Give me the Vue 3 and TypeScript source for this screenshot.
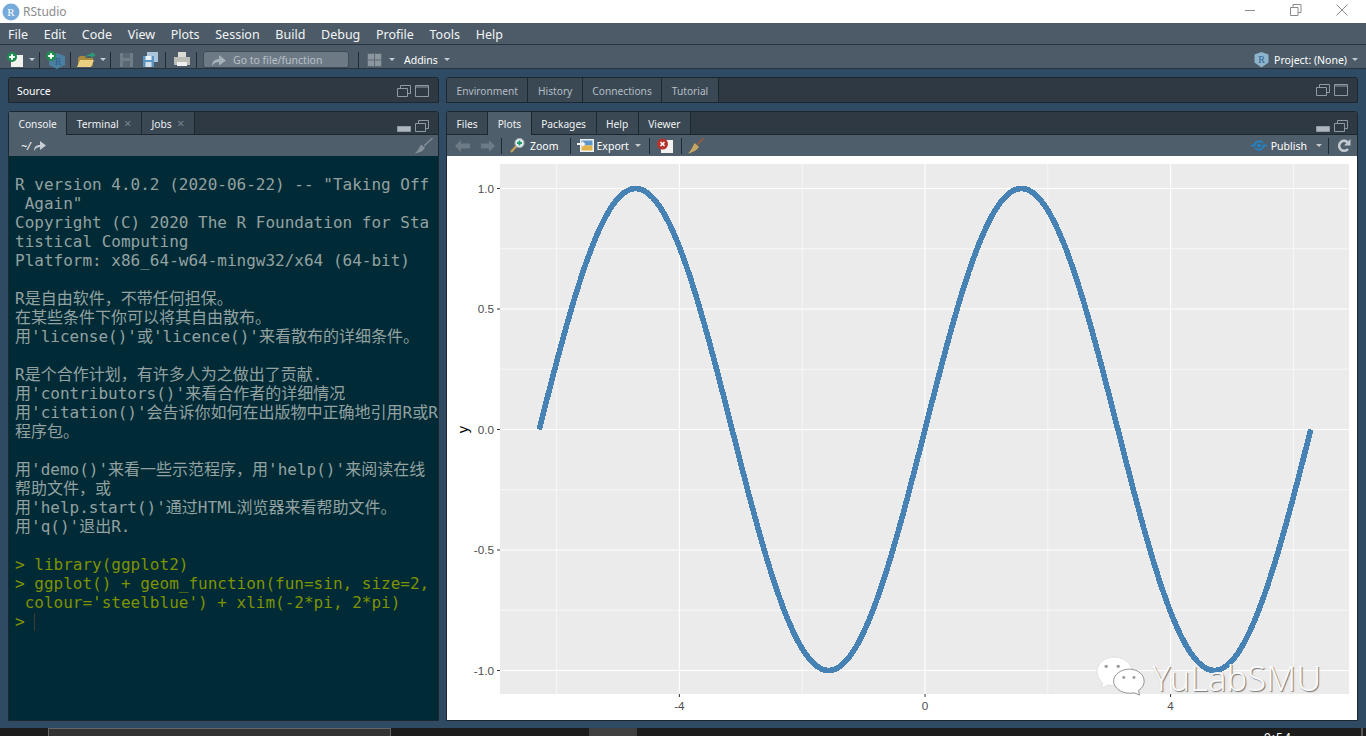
<script setup lang="ts">
import { computed } from "vue";

const menus = ["File", "Edit", "Code", "View", "Plots", "Session", "Build", "Debug", "Profile", "Tools", "Help"];
const envTabs = ["Environment", "History", "Connections", "Tutorial"];
const fileTabs = ["Files", "Plots", "Packages", "Help", "Viewer"];

const banner = [
  'R version 4.0.2 (2020-06-22) -- "Taking Off',
  ' Again"',
  "Copyright (C) 2020 The R Foundation for Sta",
  "tistical Computing",
  "Platform: x86_64-w64-mingw32/x64 (64-bit)",
  "",
  "R是自由软件，不带任何担保。",
  "在某些条件下你可以将其自由散布。",
  "用'license()'或'licence()'来看散布的详细条件。",
  "",
  "R是个合作计划，有许多人为之做出了贡献.",
  "用'contributors()'来看合作者的详细情况",
  "用'citation()'会告诉你如何在出版物中正确地引用R或R",
  "程序包。",
  "",
  "用'demo()'来看一些示范程序，用'help()'来阅读在线",
  "帮助文件，或",
  "用'help.start()'通过HTML浏览器来看帮助文件。",
  "用'q()'退出R.",
  "",
];
const input = [
  "> library(ggplot2)",
  "> ggplot() + geom_function(fun=sin, size=2,",
  " colour='steelblue') + xlim(-2*pi, 2*pi)",
];

// plot scale, in page pixels
const px = (x: number) => 925 + x * 61.4;
const py = (y: number) => 429.5 - y * 241;

const yMajor = [1, 0.5, 0, -0.5, -1];
const yMinor = [0.75, 0.25, -0.25, -0.75];
const xMajor = [-4, 0, 4];
const xMinor = [-6, -2, 2, 6];

const curve = computed(() => {
  const pts: string[] = [];
  for (let i = 0; i <= 300; i++) {
    const x = -2 * Math.PI + (i / 300) * 4 * Math.PI;
    pts.push(`${px(x).toFixed(1)},${py(Math.sin(x)).toFixed(1)}`);
  }
  return "M" + pts.join("L");
});
</script>

<template>
  <div class="app">
    <header class="titlebar">
      <svg class="r-logo" width="18" height="18" viewBox="0 0 18 18">
        <circle cx="9" cy="9" r="8.5" fill="#75aadb" />
        <text x="9" y="13" text-anchor="middle" class="r-letter">R</text>
      </svg>
      <span class="title">RStudio</span>
      <div class="winctl">
        <svg width="12" height="12" viewBox="0 0 12 12"><path d="M1 6.500h10" stroke="#8a8a8a" fill="none" /></svg>
        <svg width="12" height="12" viewBox="0 0 12 12"><path d="M.5 3.500h7.500v8H.5zM3 3.500V.5h8v8H8" stroke="#8a8a8a" fill="none" /></svg>
        <svg width="12" height="12" viewBox="0 0 12 12"><path d="M.5.500l11 11M11.500.500l-11 11" stroke="#8a8a8a" fill="none" /></svg>
      </div>
    </header>

    <nav class="menubar">
      <span v-for="m in menus" :key="m">{{ m }}</span>
    </nav>

    <div class="toolbar">
      <svg class="new-file" width="16" height="15" viewBox="0 0 16 15">
        <path d="M4 3h12v12H4z" fill="#f1f1ee" />
        <circle cx="5" cy="5" r="5" fill="#1f8a4d" />
        <path d="M5 2.200v5.600M2.200 5h5.600" stroke="#fff" stroke-width="2" />
      </svg>
      <i class="caret"></i>
      <i class="sep near"></i>
      <svg width="20" height="18" viewBox="0 0 20 18">
        <path d="M11 2l8 3v9l-8 4-8-4V5z" fill="#4a7f9f" />
        <text x="12" y="14" text-anchor="middle" class="tiny-r">R</text>
        <circle cx="5" cy="5" r="5" fill="#1f8a4d" />
        <path d="M5 2.200v5.600M2.200 5h5.600" stroke="#fff" stroke-width="2" />
      </svg>
      <i class="sep near"></i>
      <svg width="19" height="16" viewBox="0 0 19 16">
        <path d="M1 6l2-2h5l1 2h7v8H1z" fill="#a98a3c" />
        <path d="M0 15l3-7h14l-3 7z" fill="#e9cf82" />
        <path d="M8 5c2-2 4-3 6-3V0l5 3-5 3V4c-2 0-4 0-6 1z" fill="#2f9a78" />
      </svg>
      <i class="caret near"></i>
      <i class="sep near"></i>
      <svg class="save" width="13" height="14" viewBox="0 0 13 14">
        <path d="M0 0h13v14H0z" fill="#6f7d89" />
        <path d="M3 0h7v5H3zM3 8h7v6H3z" fill="#5a6873" />
      </svg>
      <svg class="save-all" width="15" height="15" viewBox="0 0 15 15">
        <path d="M4 0h11v10H4z" fill="#a9c6dd" />
        <path d="M0 4h11v11H0z" fill="#5b93c2" />
        <path d="M2.500 4h6v4h-6z" fill="#e9f0f6" />
        <path d="M2.500 10h6v5h-6z" fill="#d5dfe7" />
      </svg>
      <i class="sep mid"></i>
      <svg class="print" width="16" height="15" viewBox="0 0 16 15">
        <path d="M4 0h8v5H4z" fill="#dcdcd6" />
        <path d="M0 5h16v8H0z" fill="#bdbdb8" />
        <path d="M3 10h10v4H3z" fill="#efefef" />
      </svg>
      <i class="sep"></i>
      <div class="goto">
        <svg width="14" height="12" viewBox="0 0 14 12">
          <path d="M0 12c0-5 3-7 7-7V1l7 5.500-7 5V8c-3 0-5 1-7 4z" fill="#a5b0b9" />
        </svg>
        <span>Go to file/function</span>
      </div>
      <i class="sep wide"></i>
      <svg class="grid-icon" width="15" height="14" viewBox="0 0 15 14">
        <path d="M0 0h15v14H0z" fill="#5c6873" />
        <path d="M1 1h6v5.500H1zM8 1h6v5.500H8zM1 7.500h6V13H1zM8 7.500h6V13H8z" fill="#8c969f" />
      </svg>
      <i class="caret mid"></i>
      <span class="addins">Addins</span>
      <i class="caret"></i>
      <div class="project">
        <svg width="15" height="16" viewBox="0 0 15 16">
          <path d="M7.500 0l7 2.500v8l-7 5-7-5v-8z" fill="#8db4cc" />
          <text x="7.500" y="11" text-anchor="middle" class="tiny-r">R</text>
        </svg>
        <span>Project: (None)</span>
        <i class="caret"></i>
      </div>
    </div>

    <main class="workspace">
      <section class="col left">
        <div class="pane-head source">
          <span class="source-label">Source</span>
          <div class="pane-ctl">
            <svg width="14" height="12" viewBox="0 0 14 12"><path d="M.5 3.500h10v8H.5zM3.500 3.500V.5h10v8h-3" fill="none" stroke="#8e99a3" /></svg>
            <svg width="14" height="12" viewBox="0 0 14 12"><path d="M.5.500h13v11H.5z" fill="none" stroke="#8e99a3" /><path d="M.5 2h13" stroke="#8e99a3" /></svg>
          </div>
        </div>

        <div class="pane console">
          <div class="tabs">
            <div class="tab active">Console</div>
            <div class="tab">Terminal<span class="x">×</span></div>
            <div class="tab">Jobs<span class="x">×</span></div>
            <div class="pane-ctl">
              <svg width="14" height="12" viewBox="0 0 14 12"><path d="M.5 6.500h13v5H.5z" fill="#aeb7be" stroke="#8e99a3" /></svg>
              <svg width="14" height="12" viewBox="0 0 14 12"><path d="M.5 3.500h10v8H.5zM3.500 3.500V.5h10v8h-3" fill="none" stroke="#8e99a3" /></svg>
            </div>
          </div>
          <div class="subbar console-bar">
            <span class="cwd">~/</span>
            <svg width="12" height="10" viewBox="0 0 12 10">
              <path d="M0 10c0-4 2-6 6-6V0l6 4.500-6 4.500V6c-3 0-4 1-6 4z" fill="#c8ced3" />
            </svg>
            <svg class="broom" width="19" height="16" viewBox="0 0 19 16">
              <path d="M18.500 0L10 8" stroke="#87919a" stroke-width="1.200" />
              <path d="M7 6.500l4 3.500c-2 3-5 5-11 5.500 3-1 5-5 7-9z" fill="#87919a" />
            </svg>
          </div>
          <div class="term">
            <div v-for="(line, i) in banner" :key="i" class="line">{{ line }}</div>
            <div v-for="(line, i) in input" :key="'in' + i" class="line cmd">{{ line }}</div>
            <div class="line cmd">&gt; <span class="cursor"></span></div>
          </div>
        </div>
      </section>

      <section class="col right">
        <div class="pane-head env">
          <div v-for="t in envTabs" :key="t" class="tab flat">{{ t }}</div>
          <div class="pane-ctl">
            <svg width="14" height="12" viewBox="0 0 14 12"><path d="M.5 3.500h10v8H.5zM3.500 3.500V.5h10v8h-3" fill="none" stroke="#8e99a3" /></svg>
            <svg width="14" height="12" viewBox="0 0 14 12"><path d="M.5.500h13v11H.5z" fill="none" stroke="#8e99a3" /><path d="M.5 2h13" stroke="#8e99a3" /></svg>
          </div>
        </div>

        <div class="pane plots">
          <div class="tabs">
            <div v-for="t in fileTabs" :key="t" class="tab bright" :class="{ active: t === 'Plots' }">{{ t }}</div>
            <div class="pane-ctl">
              <svg width="14" height="12" viewBox="0 0 14 12"><path d="M.5 6.500h13v5H.5z" fill="#aeb7be" stroke="#8e99a3" /></svg>
              <svg width="14" height="12" viewBox="0 0 14 12"><path d="M.5 3.500h10v8H.5zM3.500 3.500V.5h10v8h-3" fill="none" stroke="#8e99a3" /></svg>
            </div>
          </div>
          <div class="subbar plot-bar">
            <svg class="nav" width="15" height="12" viewBox="0 0 15 12"><path d="M0 6l6-6v3.500h9v5H6V12z" fill="#6d7b87" /></svg>
            <svg class="nav-next" width="14" height="12" viewBox="0 0 14 12"><path d="M14 6L8 0v3.500H0v5h8V12z" fill="#6d7b87" /></svg>
            <i class="sep"></i>
            <svg class="zoom-icon" width="15" height="15" viewBox="0 0 15 15">
              <path d="M1 14l5.500-6" stroke="#c9a25a" stroke-width="2.200" />
              <circle cx="9.500" cy="5" r="4.600" fill="#e5eef0" stroke="#9aa7ad" />
              <path d="M9.500 2.500v5M7 5h5" stroke="#1f9a6a" stroke-width="1.800" />
            </svg>
            <span class="tool-label zoom">Zoom</span>
            <i class="sep"></i>
            <svg width="17" height="13" viewBox="0 0 17 13">
              <path d="M3 0h14v13H3z" fill="#eef1f3" />
              <path d="M4.500 1.500h11v5h-11z" fill="#5e97c6" />
              <path d="M4.500 6.500h11v5h-11z" fill="#e0b44b" />
              <path d="M0 4h5V2l3.500 3L5 8V6H0z" fill="#f5f5f5" />
            </svg>
            <span class="tool-label export">Export</span>
            <i class="caret"></i>
            <i class="sep after-caret"></i>
            <svg class="clear" width="16" height="15" viewBox="0 0 16 15">
              <path d="M4 2h12v13H4z" fill="#f2f2f0" />
              <circle cx="5.500" cy="6" r="5.500" fill="#b8332e" />
              <path d="M3.500 4l4 4M7.500 4l-4 4" stroke="#fff" stroke-width="1.600" />
            </svg>
            <i class="sep after-clear"></i>
            <svg width="16" height="16" viewBox="0 0 16 16">
              <path d="M15.500 0L9 7" stroke="#a55a3a" stroke-width="1.400" />
              <path d="M6.500 5l4.500 4c-2 3-5 5-11 6.500 3-3 4.500-6.500 6.500-10.500z" fill="#c7a763" />
            </svg>
            <div class="plot-right">
              <svg width="16" height="13" viewBox="0 0 16 13">
                <path d="M0 6.500h3.500a4.800 4.800 0 0 1 8.500-2.500M16 6.500h-3.500a4.800 4.800 0 0 1-8.500 2.500" fill="none" stroke="#2383c4" stroke-width="1.800" />
                <circle cx="8" cy="6.500" r="2" fill="#2383c4" />
              </svg>
              <span class="tool-label publish">Publish</span>
              <i class="caret"></i>
              <i class="sep before-refresh"></i>
              <svg width="14" height="14" viewBox="0 0 14 14">
                <path d="M11 10a5 5 0 1 1 .3-6" fill="none" stroke="#c3cad0" stroke-width="2.600" />
                <path d="M13.500 0v6.500H7z" fill="#c3cad0" />
              </svg>
            </div>
          </div>

          <div class="plot-area">
            <svg class="plot" width="910" height="564" viewBox="447 156 910 564">
              <rect x="500" y="164" width="849" height="530" fill="#ebebeb" />
              <line v-for="y in yMinor" :key="'yn' + y" x1="500" x2="1349" :y1="py(y)" :y2="py(y)" class="minor" />
              <line v-for="x in xMinor" :key="'xn' + x" y1="164" y2="694" :x1="px(x)" :x2="px(x)" class="minor" />
              <line v-for="y in yMajor" :key="'yj' + y" x1="500" x2="1349" :y1="py(y)" :y2="py(y)" class="major" />
              <line v-for="x in xMajor" :key="'xj' + x" y1="164" y2="694" :x1="px(x)" :x2="px(x)" class="major" />
              <path :d="curve" fill="none" stroke="#4682b4" stroke-width="5.600" stroke-linejoin="round" shape-rendering="crispEdges" />
              <g v-for="y in yMajor" :key="'yt' + y">
                <line x1="497" x2="500" :y1="py(y)" :y2="py(y)" class="tick" />
                <text x="494" :y="py(y) + 4" text-anchor="end" class="axis">{{ y.toFixed(1) }}</text>
              </g>
              <g v-for="x in xMajor" :key="'xt' + x">
                <line y1="694" y2="697" :x1="px(x)" :x2="px(x)" class="tick" />
                <text :x="px(x)" y="710" text-anchor="middle" class="axis">{{ x }}</text>
              </g>
              <text class="ylab" transform="translate(468 429.500) rotate(-90)" text-anchor="middle">y</text>
            </svg>

            <div class="watermark">
              <svg width="50" height="42" viewBox="0 0 54 45">
                <path d="M20 1C9 1 1 8 1 17c0 5 3 9 6 12l-1 6 7-4c2 .5 4 1 7 1 11 0 19-7 19-15S31 1 20 1z" fill="#fff" stroke="#ddd" />
                <path d="M36 14c-9 0-17 6-17 13s8 13 17 13c2 0 3 0 5-.5l6 2.500-1-5c4-2.500 6-6 6-10 0-7-7-13-16-13z" fill="#fff" stroke="#8a8a8a" />
                <circle cx="11" cy="11" r="1.800" fill="#9a9a9a" />
                <circle cx="24" cy="11" r="1.800" fill="#9a9a9a" />
                <circle cx="30" cy="23" r="1.600" fill="#9a9a9a" />
                <circle cx="41" cy="23" r="1.600" fill="#9a9a9a" />
              </svg>
              <span>YuLabSMU</span>
            </div>
          </div>
        </div>
      </section>
    </main>

    <footer class="taskbar">
      <div class="task-window"></div>
      <div class="task-active"></div>
      <span class="clock">9:54</span>
      <div class="task-end"></div>
    </footer>
  </div>
</template>

<style>
html,
body {
  margin: 0;
  background: #2f4a63;
}
</style>

<style scoped>
.app {
  width: 1366px;
  height: 736px;
  display: flex;
  flex-direction: column;
  overflow: hidden;
  background: #2f4a63;
  font-family: "Noto Sans", "Open Sans", sans-serif;
  color: #fff;
}

.titlebar {
  height: 23px;
  flex: none;
  background: #fff;
  display: flex;
  align-items: center;
  padding-left: 2px;
}
.r-letter {
  font: 11px "Liberation Serif", serif;
  fill: #fff;
}
.tiny-r {
  font: 10px "Liberation Serif", serif;
  fill: #2a5f8c;
}
.title {
  margin-left: 3px;
  font-size: 12px;
  color: #8c8c8c;
}
.winctl {
  margin-left: auto;
  display: flex;
  gap: 34px;
  padding: 0 18px 3px 0;
  align-items: center;
}

.menubar {
  height: 22px;
  flex: none;
  box-sizing: border-box;
  background: #4d5b68;
  border-bottom: 1px solid #27333d;
  display: flex;
  align-items: center;
  padding: 1px 0 0 8px;
  gap: 15.7px;
  font-size: 12.5px;
  color: #f2f4f5;
}

.toolbar {
  height: 24px;
  flex: none;
  box-sizing: border-box;
  background: #4d5b68;
  border-bottom: 1px solid #27333d;
  display: flex;
  align-items: center;
  padding: 6px 8px 0 7px;
  font-size: 10.5px;
  gap: 6px;
}
.sep {
  display: block;
  width: 1px;
  height: 16px;
  background: #1f2a33;
  flex: none;
}
.sep.near {
  margin-left: -2px;
}
.sep.mid {
  margin-left: 1px;
}
.sep.wide {
  margin: 0 2px 0 3px;
}
.caret {
  display: block;
  width: 0;
  height: 0;
  border: 3px solid transparent;
  border-top: 3px solid #c6ccd1;
  border-bottom: 0;
  flex: none;
}
.caret.near {
  margin-left: -2px;
}
.caret.mid {
  margin: 0 3px 0 1px;
}
.save {
  margin-left: 3px;
}
.save-all {
  margin-left: 4px;
}
.print {
  margin-left: 2px;
}
.goto {
  width: 146px;
  height: 17px;
  box-sizing: border-box;
  background: #6d7a85;
  border: 1px solid #3f4c57;
  border-radius: 3px;
  display: flex;
  align-items: center;
  padding-left: 8px;
  gap: 7px;
  font-size: 10.5px;
}
.goto span {
  color: #b8c0c6;
}
.project {
  margin-left: auto;
  display: flex;
  align-items: center;
  gap: 5px;
}
.project .caret {
  margin-left: 0;
}

.workspace {
  flex: 1;
  min-height: 0;
  display: flex;
  gap: 7px;
  padding: 8px 8px 7px;
}
.col {
  display: flex;
  flex-direction: column;
  gap: 8px;
  min-width: 0;
}
.left {
  width: 431px;
  flex: none;
}
.right {
  flex: 1;
}

.pane-head {
  height: 26px;
  flex: none;
  box-sizing: border-box;
  background: #2e3943;
  border: 1px solid #1c2730;
  border-radius: 3px 3px 0 0;
  display: flex;
  align-items: stretch;
}
.source {
  align-items: center;
  padding: 1px 0 0 8px;
}
.source-label {
  font-size: 10.5px;
}
.pane-ctl {
  margin-left: auto;
  display: flex;
  gap: 4px;
  align-items: center;
  padding-right: 9px;
}

.pane {
  flex: 1;
  min-height: 0;
  display: flex;
  flex-direction: column;
  border: 1px solid #1c2730;
  border-radius: 3px 3px 0 0;
  background: #2e3943;
}
.tabs {
  height: 23px;
  box-sizing: border-box;
  flex: none;
  display: flex;
  align-items: stretch;
  background: #2e3943;
  border-bottom: 1px solid #1c2730;
}
.tabs .pane-ctl {
  padding-top: 6px;
}
.tab {
  display: flex;
  align-items: center;
  padding: 1px 9.5px 0;
  font-size: 10.2px;
  background: #3a4854;
  border-right: 1px solid #1c2730;
  color: #f0f2f3;
}
.tab.flat {
  color: #b5bec5;
}
.tab.active {
  background: #4f5e6b;
  margin-bottom: -1px;
}
.x {
  margin-left: 5.5px;
  color: #77838d;
  font-size: 13px;
  line-height: 1;
}

.subbar {
  height: 21px;
  flex: none;
  box-sizing: border-box;
  background: #4f5e6b;
  display: flex;
  align-items: center;
}
.console-bar {
  padding-left: 12px;
  gap: 3px;
  font-size: 10.5px;
}
.cwd {
  font-style: italic;
}
.broom {
  margin-left: auto;
  margin-right: 5px;
}
.plot-bar {
  padding-left: 8px;
  padding-right: 6px;
  gap: 6px;
}
.nav-next {
  margin-left: 5px;
}
.zoom-icon {
  margin-left: 2px;
}
.tool-label {
  font-size: 10.5px;
}
.zoom {
  margin: 0 5px 0 -1px;
}
.export {
  margin-left: -3px;
}
.sep.after-caret {
  margin-left: 2px;
}
.clear {
  margin-left: 1px;
}
.sep.after-clear {
  margin-left: 2px;
}
.sep.before-refresh {
  margin-right: 2px;
}
.plot-right {
  margin-left: auto;
  display: flex;
  align-items: center;
  gap: 6px;
}
.publish {
  margin: 0 3px 0 -2px;
}

.term {
  flex: 1;
  min-height: 0;
  background: #002b36;
  padding: 19px 0 0 6px;
  font-family: "DejaVu Sans Mono", "Noto Sans CJK SC", monospace;
  font-size: 16px;
  line-height: 19px;
  color: #93a1a1;
  overflow: hidden;
}
.line {
  height: 19px;
  white-space: pre;
}
.cmd {
  color: #7f9200;
}
.cursor {
  display: inline-block;
  width: 1px;
  height: 18px;
  background: #3f3a32;
  vertical-align: -4px;
}

.plot-area {
  flex: 1;
  min-height: 0;
  position: relative;
  background: #fff;
}
.plot {
  display: block;
}
.major {
  stroke: #fff;
  stroke-width: 1.1;
}
.minor {
  stroke: #fff;
  stroke-width: 0.6;
}
.tick {
  stroke: #333;
  stroke-width: 1;
}
.axis {
  font: 11.7px "Liberation Sans", sans-serif;
  fill: #4d4d4d;
}
.ylab {
  font: 14.6px "Liberation Sans", sans-serif;
  fill: #000;
}
.watermark {
  position: absolute;
  left: 649px;
  top: 498px;
  display: flex;
  align-items: center;
  gap: 6px;
}
.watermark span {
  font-family: "Noto Sans", sans-serif;
  font-weight: 300;
  font-size: 34.6px;
  line-height: 42px;
  margin-top: 3px;
  color: #fafafa;
  text-shadow: 1px 1px 1px #777;
}

.taskbar {
  height: 8px;
  flex: none;
  background: #1c1c1c;
  position: relative;
  overflow: hidden;
}
.task-window {
  position: absolute;
  left: 48px;
  top: 0;
  width: 343px;
  height: 8px;
  box-sizing: border-box;
  background: #333;
  border: 1px solid #666;
  border-bottom: 0;
}
.task-active {
  position: absolute;
  left: 589px;
  top: 0;
  width: 48px;
  height: 8px;
  background: #404040;
}
.task-end {
  position: absolute;
  left: 1361px;
  top: 0;
  width: 2px;
  height: 8px;
  background: #5a5a5a;
}
.clock {
  position: absolute;
  left: 1264px;
  top: 3px;
  font-size: 12px;
  line-height: 14px;
  letter-spacing: 1px;
}
</style>
